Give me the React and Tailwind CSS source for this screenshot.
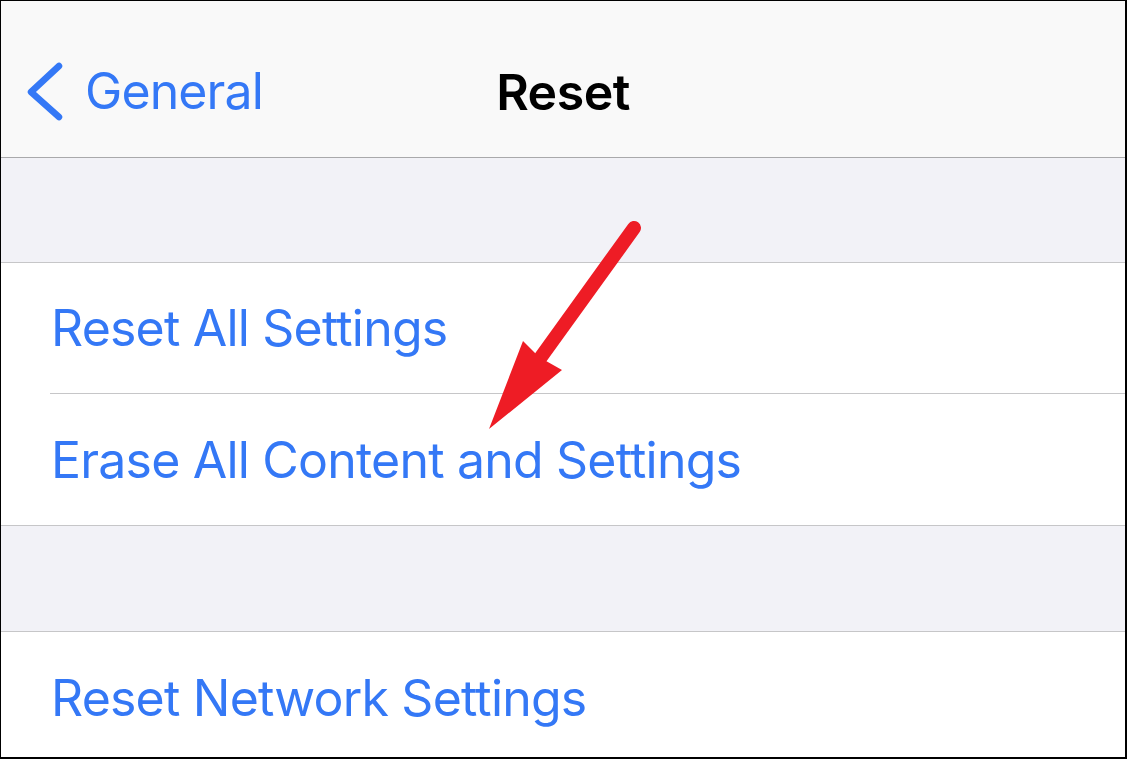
export default function App() {
  const font = { fontFamily: 'Inter, "Noto Sans", sans-serif' };
  return (
    <div className="w-[1127px] h-[760px] bg-white" style={font}>
      <div className="relative w-[1127px] h-[759px] border-t border-l border-r-2 border-b-2 border-black overflow-hidden flex flex-col">
        {/* nav bar */}
        <div className="h-[157px] shrink-0 bg-[#f9f9f9] border-b border-[#a9a9ab] relative">
          <div className="absolute left-[24px] top-[60px] flex items-center">
            <svg width="40" height="60" viewBox="0 0 40 60">
              <path d="M34 5 L6 31 L34 56" fill="none" stroke="#3478f6" strokeWidth="6.5" strokeLinecap="round" strokeLinejoin="round" />
            </svg>
            <span className="ml-[20px] text-[50px] leading-none text-[#3478f6] tracking-[-0.9px]">General</span>
          </div>
          <div className="absolute left-0 right-0 top-[66px] flex justify-center">
            <span className="text-[50px] leading-none font-semibold text-black tracking-[-0.5px]">Reset</span>
          </div>
        </div>

        <div className="h-[105px] shrink-0 bg-[#f2f2f7] border-b border-[#c6c6c8]" />

        <div className="bg-white shrink-0">
          <div className="h-[130px] flex items-center pl-[50px]">
            <span className="text-[50px] leading-none text-[#3478f6] tracking-[-0.8px]">Reset All Settings</span>
          </div>
          <div className="ml-[49px] h-px bg-[#c6c6c8]" />
          <div className="h-[132px] flex items-center pl-[50px] border-b border-[#c6c6c8]">
            <span className="text-[50px] leading-none text-[#3478f6] tracking-[-0.8px]">Erase All Content and Settings</span>
          </div>
        </div>

        <div className="h-[106px] shrink-0 bg-[#f2f2f7] border-b border-[#c6c6c8]" />

        <div className="bg-white shrink-0">
          <div className="h-[131px] flex items-center pl-[50px]">
            <span className="text-[50px] leading-none text-[#3478f6] tracking-[-0.8px]">Reset Network Settings</span>
          </div>
        </div>

        {/* annotation arrow */}
        <svg className="absolute left-0 top-0 pointer-events-none" width="1127" height="760">
          <line x1="633" y1="227" x2="540" y2="356" stroke="#ee1c25" strokeWidth="14" strokeLinecap="round" />
          <polygon points="488,428 522,340 538,356 561,369" fill="#ee1c25" />
        </svg>
      </div>
    </div>
  );
}
